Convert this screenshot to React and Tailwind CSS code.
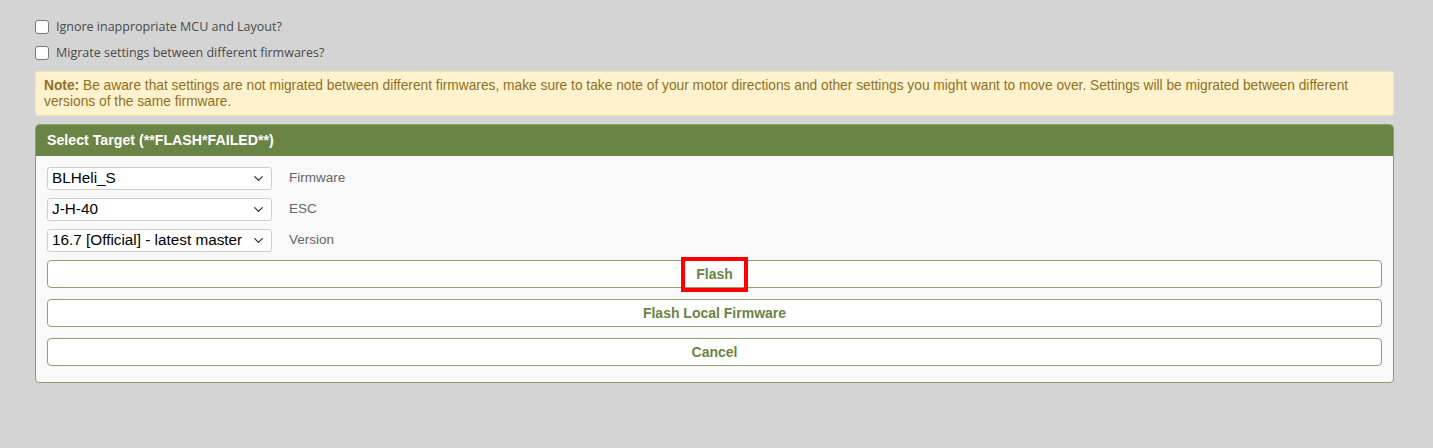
import { ChevronDown } from "lucide-react";

const selects = [
  { value: "BLHeli_S", label: "Firmware" },
  { value: "J-H-40", label: "ESC" },
  { value: "16.7 [Official] - latest master", label: "Version" },
];

function Check({ text }) {
  return (
    <label className="flex items-center h-[26px] gap-[7px]">
      <span className="w-[14px] h-[14px] rounded-[3px] border border-[#767676] bg-white" />
      <span className="text-[12.5px] text-[#4a4a4a] font-['Open_Sans',sans-serif]">{text}</span>
    </label>
  );
}

function PanelButton({ children, highlight }) {
  return (
    <div className="h-[28px] rounded-[4px] border border-[#8da36f] bg-white flex items-center justify-center">
      {highlight ? (
        <span className="border-[4px] border-[#ff0000] w-[67px] h-[35px] flex items-center justify-center">
          {children}
        </span>
      ) : (
        children
      )}
    </div>
  );
}

export default function App() {
  return (
    <div className="min-h-[448px] bg-[#d4d4d4] pl-[35px] pr-[39px] pt-[14px] font-['Liberation_Sans',Arial,sans-serif]">
      <Check text="Ignore inappropriate MCU and Layout?" />
      <Check text="Migrate settings between different firmwares?" />

      <p className="mt-[5px] bg-[#fff2cc] border border-[#f3e2b3] rounded-[3px] px-[8px] pt-[6px] pb-[5px] text-[13.75px] leading-[16px] text-[#8f7024]">
        <b>Note:</b> Be aware that settings are not migrated between different firmwares, make sure to take note of your motor directions and other settings you might want to move over. Settings will be migrated between different versions of the same firmware.
      </p>

      <div className="mt-[8px] rounded-[4px] border border-[#8aa06b] bg-[#f9f9f9] overflow-hidden">
        <div className="bg-[#6a8446] h-[31px] flex items-center px-[11px] text-white text-[14.2px] font-bold">
          Select Target (**FLASH*FAILED**)
        </div>
        <div className="px-[11px] pt-[11px] pb-[16px]">
          <div className="flex flex-col gap-[8px]">
            {selects.map((s) => (
              <div key={s.label} className="flex items-center">
                <div className="w-[225px] h-[23px] rounded-[3px] border border-[#cfcfcf] bg-white flex items-center justify-between pl-[4px] pr-[5px] text-[15.3px] text-black">
                  <span>{s.value}</span>
                  <ChevronDown className="w-[15px] h-[15px] text-[#333]" strokeWidth={2} />
                </div>
                <span className="ml-[17px] text-[13.5px] text-[#666]">{s.label}</span>
              </div>
            ))}
          </div>
          <div className="mt-[8px] flex flex-col gap-[11px] text-[14px] font-bold text-[#6a8446]">
            <PanelButton highlight>Flash</PanelButton>
            <PanelButton>Flash Local Firmware</PanelButton>
            <PanelButton>Cancel</PanelButton>
          </div>
        </div>
      </div>
    </div>
  );
}
